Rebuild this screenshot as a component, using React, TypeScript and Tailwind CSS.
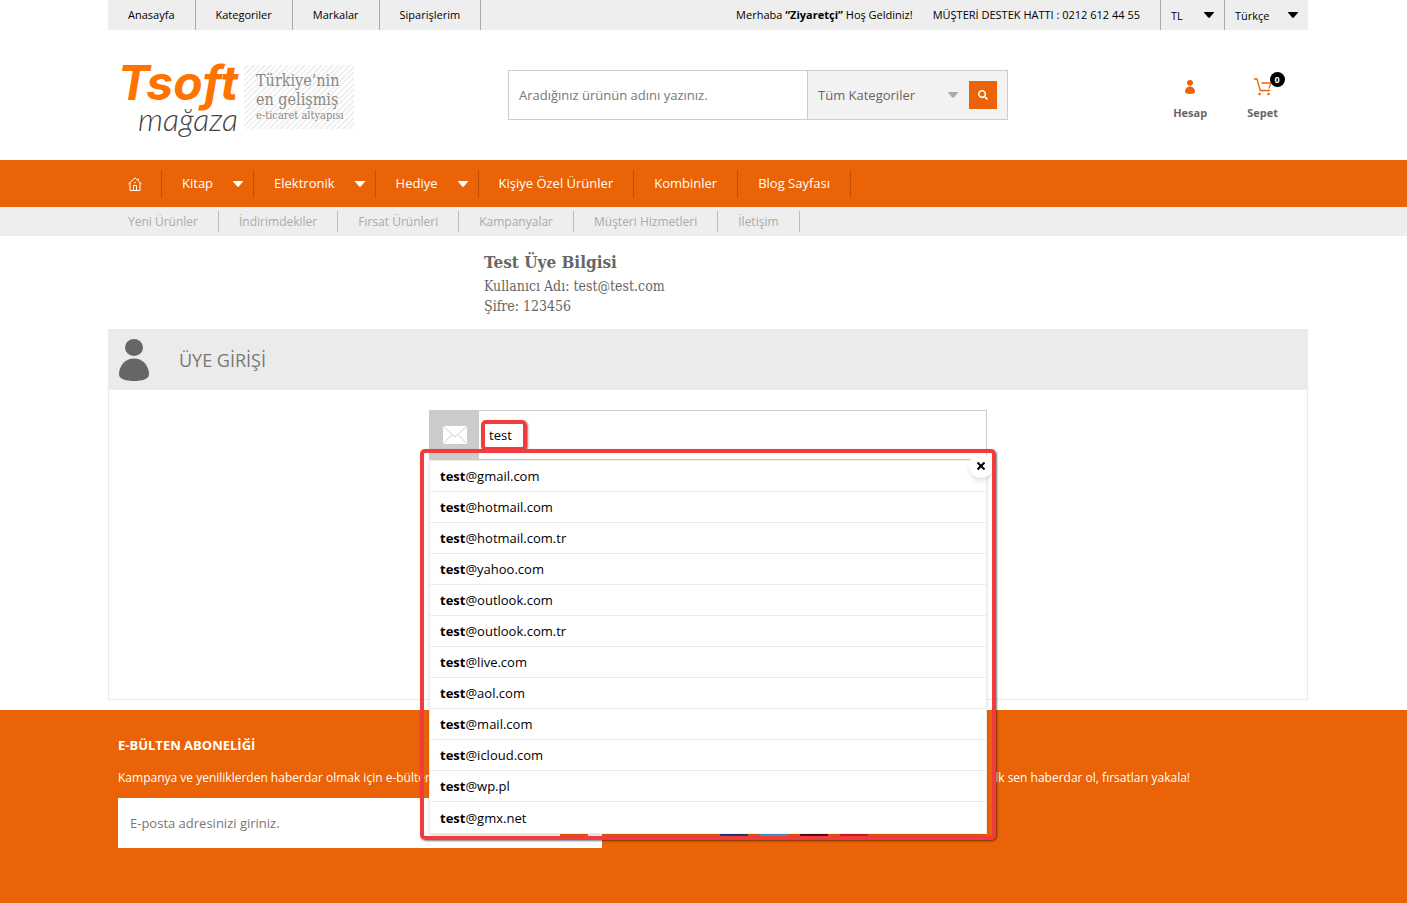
import type { ReactNode } from "react";
import { FaFacebookF, FaPinterestP, FaSearch, FaTwitter, FaYoutube } from "react-icons/fa";

const topLinks = ["Anasayfa", "Kategoriler", "Markalar", "Siparişlerim"];

const mainLinks = [
  { label: "Kitap", hasMenu: true },
  { label: "Elektronik", hasMenu: true },
  { label: "Hediye", hasMenu: true },
  { label: "Kişiye Özel Ürünler", hasMenu: false },
  { label: "Kombinler", hasMenu: false },
  { label: "Blog Sayfası", hasMenu: false },
];

const subLinks = [
  "Yeni Ürünler",
  "İndirimdekiler",
  "Fırsat Ürünleri",
  "Kampanyalar",
  "Müşteri Hizmetleri",
  "İletişim",
];

const mailDomains = [
  "gmail.com",
  "hotmail.com",
  "hotmail.com.tr",
  "yahoo.com",
  "outlook.com",
  "outlook.com.tr",
  "live.com",
  "aol.com",
  "mail.com",
  "icloud.com",
  "wp.pl",
  "gmx.net",
];

const socials = [
  { name: "Facebook", Icon: FaFacebookF, bg: "bg-[#24407c]" },
  { name: "Twitter", Icon: FaTwitter, bg: "bg-[#41a5d0]" },
  { name: "Pinterest", Icon: FaPinterestP, bg: "bg-[#5f1014]" },
  { name: "Youtube", Icon: FaYoutube, bg: "bg-[#e21b22]" },
];

function Container({ children, className = "" }: { children?: ReactNode; className?: string }) {
  return (
    <div className="pl-[9px]">
      <div className={`mx-auto max-w-[1200px] ${className}`}>{children}</div>
    </div>
  );
}

function Caret({ className = "" }: { className?: string }) {
  return (
    <svg viewBox="0 0 12 6" className={`h-1.5 w-3 shrink-0 fill-current ${className}`} aria-hidden="true">
      <path d="M1.500 0h9q1 0 .4.8L7 5.200q-1 1-2 0L1.100.8Q.5 0 1.500 0z" />
    </svg>
  );
}

function PersonIcon({ className = "" }: { className?: string }) {
  return (
    <svg viewBox="0 0 30 42" className={className} fill="currentColor" aria-hidden="true">
      <ellipse cx="15" cy="8.5" rx="9" ry="8.5" />
      <path d="M15 19.500C24 19.500 30 27 30 35.500C30 40 23 42 15 42S0 40 0 35.500C0 27 6 19.500 15 19.500z" />
    </svg>
  );
}

function TopBar() {
  return (
    <Container className="flex h-[30px] items-stretch justify-between bg-[#eee] text-[11px] text-black">
      <nav className="flex">
        {topLinks.map((link) => (
          <a key={link} href="#" className="flex items-center border-r border-[#aaa] px-5">
            {link}
          </a>
        ))}
      </nav>
      <div className="flex items-stretch">
        <div className="flex items-center gap-5 pr-5">
          <span>
            Merhaba <b>“Ziyaretçi”</b> Hoş Geldiniz!
          </span>
          <span>MÜŞTERİ DESTEK HATTI : 0212 612 44 55</span>
        </div>
        <label className="relative flex w-16 items-center border-l border-[#aaa]">
          <select aria-label="Para birimi" className="h-full w-full appearance-none pt-0.5 pl-2.5">
            <option>TL</option>
          </select>
          <Caret className="pointer-events-none absolute right-[9px]" />
        </label>
        <label className="relative flex w-[84px] items-center border-l border-[#aaa]">
          <select aria-label="Dil" className="h-full w-full appearance-none pt-0.5 pl-2.5">
            <option>Türkçe</option>
          </select>
          <Caret className="pointer-events-none absolute right-[9px]" />
        </label>
      </div>
    </Container>
  );
}

function Logo() {
  return (
    <a href="#" className="flex items-start gap-1.5 pt-3 pl-2.5">
      <span className="flex w-[120px] flex-col items-end">
        <span className="font-['Inter'] text-[48px] leading-9 font-bold text-[#ff7400] italic">Tsoft</span>
        <span className="font-['Lato'] text-[32px] leading-9 font-light text-[#444] italic">mağaza</span>
      </span>
      <span className="flex h-16 w-[110px] flex-col justify-center bg-[repeating-linear-gradient(135deg,#fff_0px,#fff_2px,#f0f0f0_2px,#f0f0f0_4px)] pl-3 font-['DejaVu_Serif_Condensed','DejaVu_Serif',serif] text-[#888]">
        <span className="text-[16px] leading-[19px]">Türkiye’nin</span>
        <span className="text-[16px] leading-[19px]">en gelişmiş</span>
        <span className="text-[11px] leading-3.5 whitespace-nowrap">e-ticaret altyapısı</span>
      </span>
    </a>
  );
}

function Header() {
  return (
    <header>
      <Container className="grid h-[130px] grid-cols-12 items-center">
        <div className="col-span-4">
          <Logo />
        </div>
        <form className="col-span-5 flex h-[50px] border border-[#ccc] text-[13px] text-[#666]">
          <input
            aria-label="Ürün ara"
            placeholder="Aradığınız ürünün adını yazınız."
            className="min-w-0 flex-1 px-2.5 pt-0.5 outline-none placeholder:text-[#777]"
          />
          <div className="flex w-[200px] items-center border-l border-[#ccc] bg-[#f2f2f2] pr-2.5">
            <label className="relative flex h-full flex-1 items-center">
              <select aria-label="Kategori" className="h-full w-full appearance-none pt-0.5 pl-2.5">
                <option>Tüm Kategoriler</option>
              </select>
              <Caret className="pointer-events-none absolute right-2.5 text-[#aaa]" />
            </label>
            <button
              type="button"
              aria-label="Ara"
              className="flex size-7 items-center justify-center bg-[#ea6307] text-white"
            >
              <FaSearch className="size-2.5" />
            </button>
          </div>
        </form>
        <div className="col-span-3 flex justify-end gap-10 pt-2 pr-[30px] text-[11px] font-bold text-[#666]">
          <a href="#" className="flex flex-col items-center gap-2">
            <span className="flex h-5 items-center">
              <PersonIcon className="h-3.5 w-2.5 text-[#ea6307]" />
            </span>
            Hesap
          </a>
          <a href="#" className="flex flex-col items-center gap-2">
            <span className="relative flex h-5 items-center">
              <svg
                viewBox="0 0 18 18"
                className="size-[18px] stroke-[#ea6307]"
                fill="none"
                strokeWidth="1.300"
                aria-hidden="true"
              >
                <path d="M0 1h3l3.200 11.500h9.800M7.500 5H17l-2.200 5.500" />
                <circle cx="5.500" cy="16" r="1.300" fill="#ea6307" stroke="none" />
                <circle cx="14.500" cy="16" r="1.300" fill="#ea6307" stroke="none" />
              </svg>
              <span className="absolute -top-[5px] left-4 flex size-[15px] items-center justify-center rounded-full bg-black text-[9px] text-white">
                0
              </span>
            </span>
            Sepet
          </a>
        </div>
      </Container>
    </header>
  );
}

function Navigation() {
  return (
    <>
      <nav className="bg-[#ea6307] text-[13px] font-medium text-white">
        <Container className="flex h-[47px] items-center">
          <a href="#" aria-label="Anasayfa" className="flex h-7 items-center border-r border-[#c44f00] pr-[19px] pl-5">
            <svg viewBox="0 0 14 14" className="size-3.5 stroke-white" fill="none" aria-hidden="true">
              <path d="M.4 7L7 .8 13.600 7M2 5.800v7.700h10V5.800M5.500 13.500v-5h3v5M6.200 5.500h1.600M10.500 3V1.500" />
            </svg>
          </a>
          {mainLinks.map(({ label, hasMenu }) => (
            <a
              key={label}
              href="#"
              className={`flex h-7 items-center border-r border-[#c44f00] pl-5 ${hasMenu ? "pr-[9px]" : "pr-5"}`}
            >
              {label}
              {hasMenu && <Caret className="ml-[19px]" />}
            </a>
          ))}
        </Container>
      </nav>
      <nav className="bg-[#eee] text-[12px] text-[#aaa]">
        <Container className="flex h-[29px] items-center">
          {subLinks.map((link) => (
            <a key={link} href="#" className="flex h-[21px] items-center border-r border-[#bbb] px-5">
              {link}
            </a>
          ))}
        </Container>
      </nav>
    </>
  );
}

function Suggestions({ query }: { query: string }) {
  return (
    <div className="absolute inset-x-0 top-full z-10 border border-[#ebebeb] bg-white shadow-md">
      <ul>
        {mailDomains.map((domain) => (
          <li key={domain} className="h-[31px] border-b border-[#ebebeb] last:border-b-0">
            <button type="button" className="flex h-full w-full items-center px-2.5 pt-0.5 text-left">
              <b>{query}</b>@{domain}
            </button>
          </li>
        ))}
      </ul>
      <button
        type="button"
        aria-label="Kapat"
        className="absolute -top-[7px] -right-[7px] flex size-6 items-center justify-center rounded-full bg-white shadow-md"
      >
        <svg viewBox="0 0 8 8" className="size-2 stroke-black" strokeWidth="2" aria-hidden="true">
          <path d="M.5.5l7 7M7.500.5l-7 7" />
        </svg>
      </button>
      <div className="pointer-events-none absolute -inset-x-2.5 -top-3 -bottom-[7px] rounded-[5px] border-4 border-[#f03c3c] shadow-[1px_1px_2px_rgba(0,0,0,0.5)]" />
    </div>
  );
}

function Login() {
  return (
    <main>
      <Container>
        <div className="mx-auto h-[93px] max-w-[448px] pt-4 font-['DejaVu_Serif_Condensed','DejaVu_Serif',serif] text-[14px] leading-5 text-[#666]">
          <h2 className="mb-1 text-[17px] leading-5 font-bold">Test Üye Bilgisi</h2>
          <p>Kullanıcı Adı: test@test.com</p>
          <p>Şifre: 123456</p>
        </div>
        <section className="mb-2.5 border border-[#ebebeb]">
          <header className="flex h-[60px] items-center gap-[30px] bg-[#ebebeb] pl-2.5">
            <PersonIcon className="h-[42px] w-[30px] text-[#666]" />
            <h1 className="text-[18px] text-[#777]">ÜYE GİRİŞİ</h1>
          </header>
          <form className="min-h-[309px] pt-5 text-[13px] text-black">
            <div className="relative mx-auto max-w-[558px]">
              <div className="flex h-[50px] border border-[#ccc]">
                <label htmlFor="email" aria-label="E-posta" className="flex w-[49px] items-center justify-center bg-[#ccc]">
                  <svg viewBox="0 0 24 18" className="h-[18px] w-6" aria-hidden="true">
                    <rect width="24" height="18" rx="1" fill="#fff" />
                    <path d="M.5.5L12 11 23.500.5M.5 17.500L8.500 9M23.500 17.500L15.500 9" fill="none" stroke="#ccc" />
                  </svg>
                </label>
                <input id="email" defaultValue="test" className="min-w-0 flex-1 px-2.5 pt-0.5 outline-none" />
              </div>
              <div className="pointer-events-none absolute top-2.5 left-[52px] h-[31px] w-[46px] rounded-[5px] border-4 border-[#f03c3c] shadow-[1px_1px_2px_rgba(0,0,0,0.5)]" />
              <Suggestions query="test" />
            </div>
          </form>
        </section>
      </Container>
    </main>
  );
}

function Footer() {
  return (
    <footer className="bg-[#ea6307] text-white">
      <Container className="flex min-h-[193px] gap-[118px] px-2.5 pt-[25px] text-[12px]">
        <form className="w-[484px]">
          <h3 className="text-[13px] leading-5 font-bold">E-BÜLTEN ABONELİĞİ</h3>
          <label htmlFor="newsletter" className="mt-[13px] mb-2.5 block leading-5">
            Kampanya ve yeniliklerden haberdar olmak için e-bülten
          </label>
          <div className="flex h-[50px] items-center bg-white pr-3.5">
            <input
              id="newsletter"
              placeholder="E-posta adresinizi giriniz."
              className="h-full min-w-0 flex-1 px-3 text-[13px] outline-none placeholder:text-[#777]"
            />
            <button type="button" aria-label="Gönder" className="size-7 bg-[#ea6307]" />
          </div>
        </form>
        <div className="w-[470px] pt-5">
          <p className="mt-[13px] mb-2.5 text-right leading-5">İlk sen haberdar ol, fırsatları yakala!</p>
          <div className="flex h-[50px] items-center gap-3">
            {socials.map(({ name, Icon, bg }) => (
              <a key={name} href="#" aria-label={name} className={`flex size-7 items-center justify-center rounded-xs ${bg}`}>
                <Icon className="size-3.5" />
              </a>
            ))}
          </div>
        </div>
      </Container>
    </footer>
  );
}

export default function App() {
  return (
    <div className="min-h-screen bg-white font-['Open_Sans',sans-serif]">
      <TopBar />
      <Header />
      <Navigation />
      <Login />
      <Footer />
    </div>
  );
}
